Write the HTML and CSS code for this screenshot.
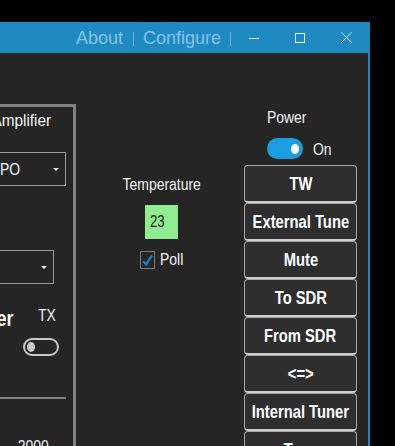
FILE: index.html
```html
<!DOCTYPE html>
<html lang="en">
<head>
<meta charset="utf-8">
<title>Amplifier Control</title>
<link rel="stylesheet" href="styles.css">
</head>
<body>
<div class="screen">
  <div class="gap-top"></div>
  <div class="window">
    <header class="titlebar">
      <span class="menu-item">About</span>
      <span class="sep sep-first"></span>
      <span class="menu-item">Configure</span>
      <span class="sep sep-last"></span>
      <div class="caption-btn">
        <svg width="10" height="10" viewBox="0 0 10 10"><path d="M0 5.5H10" stroke="#e6f3fa" stroke-width="1"/></svg>
      </div>
      <div class="caption-btn">
        <svg width="10" height="10" viewBox="0 0 10 10"><rect x="0.5" y="0.5" width="9" height="9" fill="none" stroke="#e6f3fa" stroke-width="1"/></svg>
      </div>
      <div class="caption-btn">
        <svg width="11" height="11" viewBox="0 0 11 11"><path d="M0.5 0.5L10.5 10.5M10.5 0.5L0.5 10.5" stroke="#e6f3fa" stroke-width="1"/></svg>
      </div>
    </header>
    <main class="client">
      <section class="group">
        <div class="group-header">Amplifier</div>
        <div class="combo combo-mode"><span class="combo-text narrow origin-left">PO</span><span class="combo-arrow"></span></div>
        <div class="combo combo-band"><span class="combo-arrow"></span></div>
        <div class="tx-row">
          <div class="big-label narrow origin-right">Tuner</div>
          <div class="tx-col">
            <div class="label tx-label"><span class="narrow origin-left">TX</span></div>
            <div class="switch switch-off"><span class="knob"></span></div>
          </div>
        </div>
        <div class="hline"></div>
        <div class="value-row narrow origin-right">2000</div>
      </section>
      <section class="temp-col">
        <div class="label narrow">Temperature</div>
        <div class="temp-box"><span class="narrow origin-left">23</span></div>
        <div class="check-row">
          <span class="checkbox">
            <svg width="13" height="16" viewBox="0 0 13 16"><path d="M2.2 9.2L5.2 12.6L10.8 3.4" fill="none" stroke="#1f7fc0" stroke-width="2.2"/></svg>
          </span>
          <span class="label poll-label"><span class="narrow origin-left">Poll</span></span>
        </div>
      </section>
      <section class="ctrl-col">
        <div class="power">
          <div class="label"><span class="narrow origin-left">Power</span></div>
          <div class="power-row">
            <span class="switch switch-on"><span class="knob"></span></span>
            <span class="label on-label"><span class="narrow origin-left">On</span></span>
          </div>
        </div>
        <div class="btn-stack">
          <button class="btn"><span class="narrow">TW</span></button>
          <button class="btn"><span class="narrow">External Tune</span></button>
          <button class="btn"><span class="narrow">Mute</span></button>
          <button class="btn"><span class="narrow">To SDR</span></button>
          <button class="btn"><span class="narrow">From SDR</span></button>
          <button class="btn"><span class="narrow">&lt;=&gt;</span></button>
          <button class="btn"><span class="narrow">Internal Tuner</span></button>
          <button class="btn"><span class="narrow">Tune</span></button>
        </div>
      </section>
    </main>
  </div>
</div>
</body>
</html>
```
FILE: styles.css
```css
html, body {
  margin: 0;
  padding: 0;
  background: #000;
}

.screen {
  width: 395px;
  height: 446px;
  overflow: hidden;
  background: #000;
  font-family: "Liberation Sans", Arial, sans-serif;
  color: #f2f2f2;
}

/* Condensed rendering of the UI font (the app's text is narrow) */
.narrow {
  display: inline-block;
  white-space: nowrap;
  transform: scaleX(0.82);
}

.origin-left {
  transform-origin: left center;
}

.origin-right {
  transform-origin: right center;
}

.gap-top {
  height: 22px;
}

.window {
  width: 370px;
  height: 424px;
  background: #1f89c1;
  display: flex;
  flex-direction: column;
}

/* Title bar */
.titlebar {
  height: 31px;
  flex: none;
  display: flex;
  justify-content: flex-end;
  align-items: flex-start;
  padding-right: 1px;
}

.menu-item {
  font-size: 18px;
  line-height: 29px;
  padding-top: 2px;
  color: #86c3e6;
}

.sep {
  width: 1px;
  height: 14px;
  margin-top: 10px;
  background: #6fb4dc;
}

.sep-first {
  margin-left: 10px;
  margin-right: 9px;
}

.sep-last {
  margin-left: 9px;
}

.caption-btn {
  width: 46px;
  height: 31px;
  display: flex;
  align-items: center;
  justify-content: center;
}

.caption-btn svg {
  display: block;
}

/* Client area */
.client {
  flex: 1;
  margin-right: 2px;
  background: #252525;
  overflow: hidden;
  display: flex;
  align-items: flex-start;
}

.label {
  font-size: 17px;
  line-height: 20px;
  color: #f2f2f2;
}

/* Left group */
.group {
  flex: none;
  box-sizing: border-box;
  width: 176px;
  margin-left: -100px;
  margin-top: 51px;
  border: 3px solid #808080;
  border-bottom: none;
  display: flex;
  flex-direction: column;
  align-items: flex-end;
}

.group-header {
  display: inline-block;
  white-space: nowrap;
  font-size: 17px;
  line-height: 20px;
  margin-top: 4px;
  margin-right: 22px;
  transform: scaleX(0.9);
  transform-origin: right center;
}

.combo {
  box-sizing: border-box;
  width: 100px;
  height: 34px;
  border: 1px solid #9a9a9a;
  display: flex;
  align-items: center;
  padding-left: 33px;
  padding-top: 2px;
}

.combo-mode {
  margin-top: 21px;
  margin-right: 7px;
}

.combo-band {
  margin-top: 64px;
  margin-right: 19px;
}

.combo-text {
  font-size: 17px;
  line-height: 20px;
}

.combo-arrow {
  margin-left: auto;
  margin-right: 6px;
  margin-bottom: 2px;
  width: 0;
  height: 0;
  border-left: 3px solid transparent;
  border-right: 3px solid transparent;
  border-top: 3px solid #f2f2f2;
}

.tx-row {
  display: flex;
  align-items: flex-start;
  margin-top: 22px;
  margin-right: 14px;
}

.big-label {
  font-size: 22px;
  line-height: 26px;
  font-weight: bold;
  margin-right: 10px;
}

.tx-col {
  width: 36px;
  display: flex;
  flex-direction: column;
}

.tx-label {
  margin-left: 15px;
}

.switch {
  box-sizing: border-box;
  display: flex;
  align-items: center;
  flex: none;
}

.switch-off {
  width: 36px;
  height: 18px;
  margin-top: 12px;
  border: 2px solid #c8c8c8;
  border-radius: 9px;
  padding-left: 2px;
}

.switch-off .knob {
  width: 8px;
  height: 10px;
  border-radius: 50%;
  background: #c8c8c8;
}

.hline {
  width: 200px;
  height: 2px;
  margin-top: 41px;
  margin-right: 7px;
  background: #808080;
}

.value-row {
  font-size: 17px;
  line-height: 20px;
  margin-top: 38px;
  margin-right: 24px;
}

/* Temperature column */
.temp-col {
  flex: none;
  width: 101px;
  margin-left: 35px;
  margin-top: 122px;
  display: flex;
  flex-direction: column;
  align-items: center;
}

.temp-box {
  box-sizing: border-box;
  width: 33px;
  height: 34px;
  margin-top: 10px;
  padding: 7px 0 0 5px;
  background: #90ec90;
  color: #1e1e1e;
  font-size: 16px;
  line-height: 20px;
}

.check-row {
  display: flex;
  align-items: flex-start;
  margin-top: 11px;
}

.checkbox {
  box-sizing: border-box;
  width: 15px;
  height: 18px;
  margin-top: 1px;
  border: 1px solid #7c7c7c;
  display: flex;
  align-items: center;
  justify-content: center;
}

.checkbox svg {
  display: block;
}

.poll-label {
  width: 23px;
  margin-left: 5px;
  white-space: nowrap;
}

/* Right control column */
.ctrl-col {
  flex: none;
  width: 113px;
  margin-left: 32px;
  margin-top: 55px;
  display: flex;
  flex-direction: column;
}

.power {
  width: 67px;
  align-self: center;
}

.power-row {
  display: flex;
  align-items: flex-start;
  margin-top: 10px;
}

.switch-on {
  width: 36px;
  height: 21px;
  border-radius: 10.5px;
  background: #1b9de0;
  justify-content: flex-end;
  padding-right: 4px;
}

.switch-on .knob {
  width: 8px;
  height: 10px;
  border-radius: 50%;
  background: #fff;
}

.on-label {
  margin-left: 10px;
  margin-top: 2px;
  white-space: nowrap;
}

.btn-stack {
  margin-top: 5px;
  display: flex;
  flex-direction: column;
}

.btn {
  box-sizing: border-box;
  width: 113px;
  height: 38px;
  margin: 0;
  padding: 0;
  background: #2e2e2e;
  border: 1px solid #a8a8a8;
  border-bottom: 2px solid #cdcdcd;
  border-radius: 4px;
  color: #ffffff;
  font-family: inherit;
  font-size: 18px;
  font-weight: bold;
  line-height: 20px;
  display: flex;
  align-items: center;
  justify-content: center;
  white-space: nowrap;
}
```
